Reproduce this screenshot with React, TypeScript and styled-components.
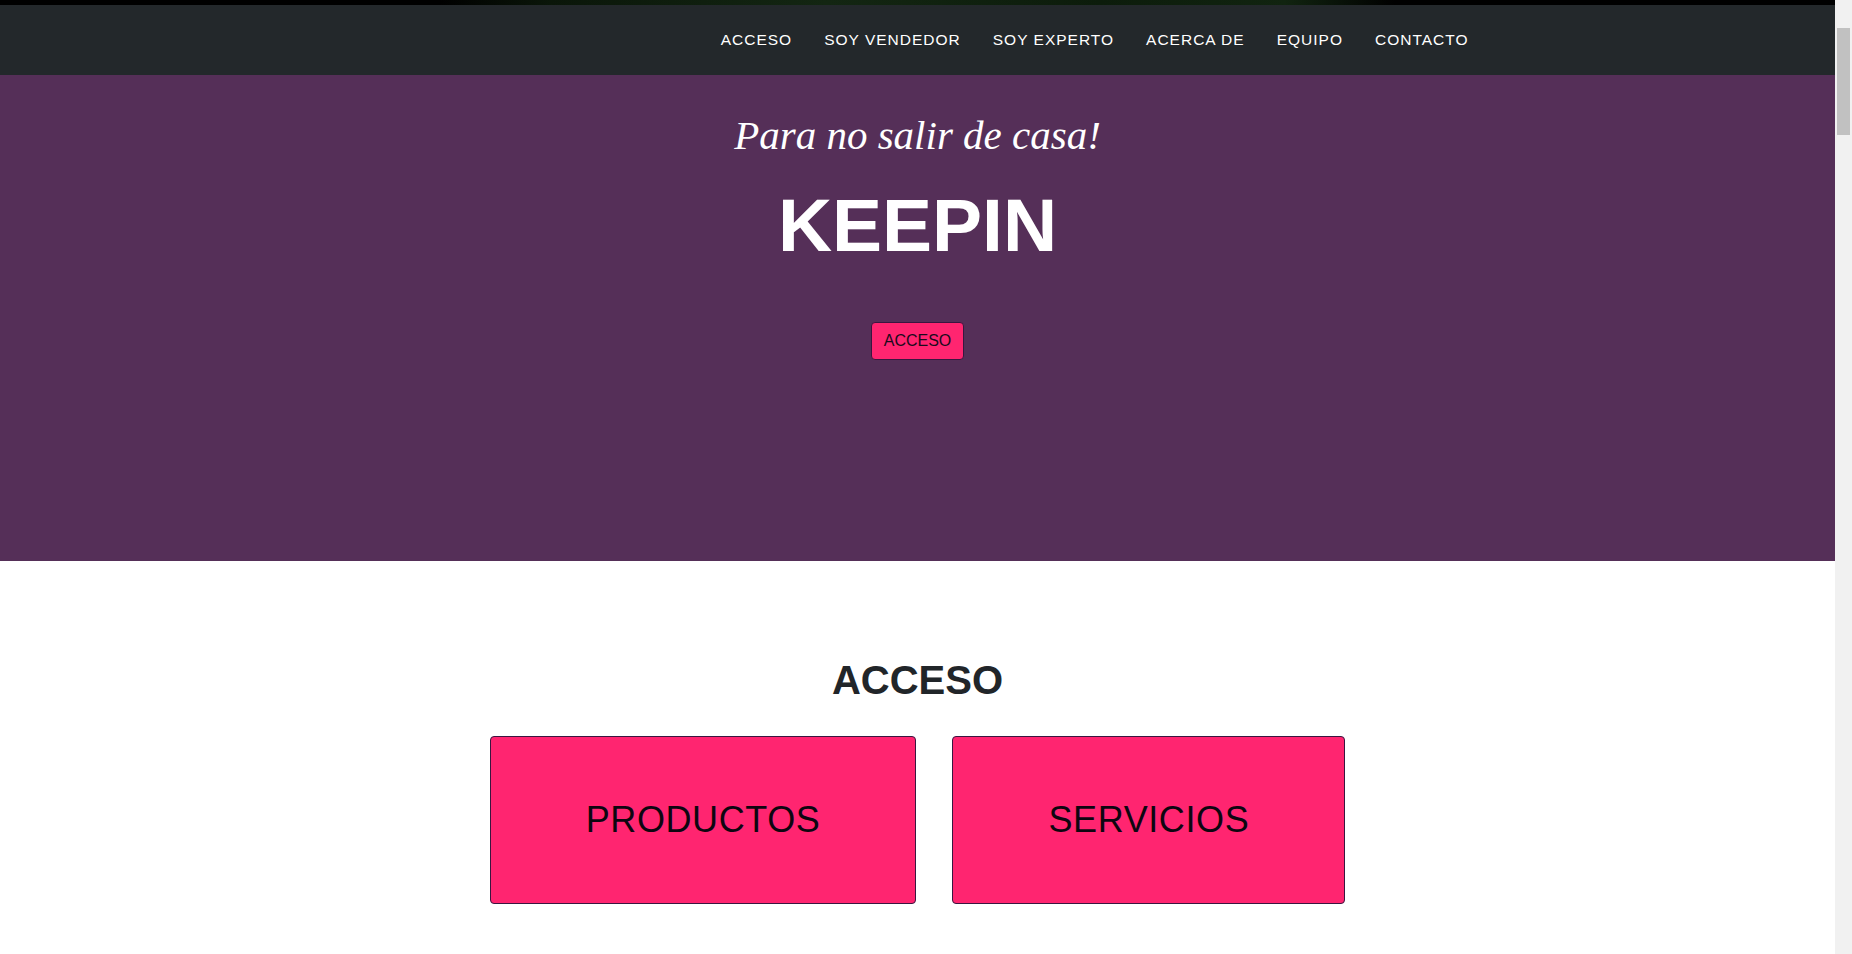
import styled, { createGlobalStyle } from 'styled-components';

// the reference was taken with a classic 17px scrollbar, so the page is laid out 17px narrower
const GlobalStyle = createGlobalStyle`
  html {
    margin: 0;
    padding: 0;
    background: #f1f1f1;
  }
  html::after {
    content: '';
    position: fixed;
    top: 28px;
    right: 2px;
    width: 13px;
    height: 107px;
    background: #c1c1c1;
  }
  body {
    margin: 0 17px 0 0;
    padding: 0;
    background: #fff;
    min-height: 100vh;
    font-family: "Liberation Sans", Arial, sans-serif;
    color: #212529;
  }
  * {
    box-sizing: border-box;
  }
`;

const TopStrip = styled.div`
  height: 5px;
  background: linear-gradient(
    90deg,
    #000 0%,
    #000 24%,
    #0a1609 30%,
    #132612 45%,
    #0c1c0b 60%,
    #112410 70%,
    #000 76%,
    #000 100%
  );
`;

const NavBar = styled.nav`
  height: 70px;
  background: #23282b;
  display: flex;
  align-items: center;
`;

const NavInner = styled.div`
  width: 100%;
  max-width: 1140px;
  margin: 0 auto;
  padding: 0 19px 0 15px;
  display: flex;
  justify-content: flex-end;
`;

const NavList = styled.ul`
  list-style: none;
  margin: 0;
  padding: 0;
  display: flex;
  gap: 32px;
`;

const NavLink = styled.a`
  font-family: "Liberation Sans", Arial, sans-serif;
  font-size: 15.5px;
  letter-spacing: 1px;
  color: #fff;
  text-decoration: none;
  text-transform: uppercase;
  line-height: 20px;
`;

const Header = styled.header`
  background: #552f58;
  padding: 40px 0 201px;
  text-align: center;
  color: #fff;
`;

const LeadIn = styled.div`
  font-family: "Liberation Serif", "Times New Roman", serif;
  font-style: italic;
  font-size: 41px;
  line-height: 40px;
  margin-bottom: 33px;
`;

const Heading = styled.h1`
  margin: 0 0 59px;
  font-family: "Liberation Sans", Arial, sans-serif;
  font-weight: 700;
  font-size: 75px;
  line-height: 75px;
  text-transform: uppercase;
`;

const HeroButton = styled.a`
  display: inline-block;
  padding: 6px 12px;
  font-family: "Liberation Sans", Arial, sans-serif;
  font-size: 16px;
  line-height: 24px;
  color: #1a0a1c;
  background: #ff2570;
  border: 1px solid #3a1640;
  border-radius: 4px;
  text-decoration: none;
  text-transform: uppercase;
`;

const Section = styled.section`
  padding: 97px 0 150px;
  text-align: center;
`;

const SectionHeading = styled.h2`
  margin: 0 0 34px;
  font-family: "Liberation Sans", Arial, sans-serif;
  font-weight: 700;
  font-size: 40px;
  line-height: 44px;
  color: #212529;
  text-transform: uppercase;
`;

const CardRow = styled.div`
  display: flex;
  justify-content: center;
  gap: 36px;
`;

const AccessCard = styled.a`
  display: block;
  padding: 56px 95px;
  font-family: "Liberation Sans", Arial, sans-serif;
  font-size: 36px;
  line-height: 54px;
  letter-spacing: 0.6px;
  color: #0d0610;
  background: #ff2570;
  border: 1px solid #3a1640;
  border-radius: 4px;
  text-decoration: none;
  text-transform: uppercase;
`;

const links = ['Acceso', 'Soy Vendedor', 'Soy Experto', 'Acerca de', 'Equipo', 'Contacto'];

export default function App() {
  return (
    <>
      <GlobalStyle />
      <TopStrip />
      <NavBar>
        <NavInner>
          <NavList>
            {links.map((l) => (
              <li key={l}>
                <NavLink href="#">{l}</NavLink>
              </li>
            ))}
          </NavList>
        </NavInner>
      </NavBar>
      <Header>
        <LeadIn>Para no salir de casa!</LeadIn>
        <Heading>Keepin</Heading>
        <HeroButton href="#">Acceso</HeroButton>
      </Header>
      <Section>
        <SectionHeading>Acceso</SectionHeading>
        <CardRow>
          <AccessCard href="#">Productos</AccessCard>
          <AccessCard href="#">Servicios</AccessCard>
        </CardRow>
      </Section>
    </>
  );
}
